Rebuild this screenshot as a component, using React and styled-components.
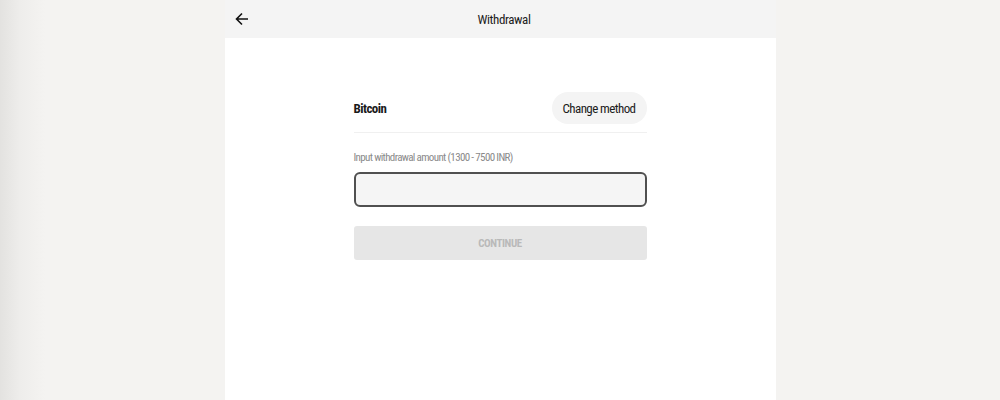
import styled, { createGlobalStyle } from 'styled-components';

const GlobalStyle = createGlobalStyle`
  html, body {
    margin: 0;
    padding: 0;
  }
  body {
    font-family: "Roboto Condensed", "Liberation Sans Narrow", "DejaVu Sans Condensed", Roboto, sans-serif;
    letter-spacing: -0.5px;
    color: #1f1f1f;
  }
`;

const Page = styled.div`
  display: flex;
  justify-content: center;
  min-height: 100vh;
  background: linear-gradient(to right, #e3e2e0 0px, #eeedeb 20px, #f4f3f1 45px, #f4f3f1 100%);
`;

const Panel = styled.div`
  width: 551px;
  background: #ffffff;
  display: flex;
  flex-direction: column;
`;

const Header = styled.div`
  height: 38px;
  background: #f4f4f4;
  display: grid;
  grid-template-columns: 1fr auto 1fr;
  align-items: center;
  padding: 0 10px;
`;

const BackButton = styled.button`
  justify-self: start;
  display: flex;
  align-items: center;
  border: none;
  background: none;
  padding: 0;
  cursor: pointer;
  color: #111;
`;

const Title = styled.div`
  font-size: 13px;
  font-weight: 400;
  letter-spacing: -0.4px;
  color: #1c1c1c;
  padding-left: 8px;
`;

const Body = styled.div`
  width: 293px;
  margin: 0 auto;
  padding-top: 54px;
  display: flex;
  flex-direction: column;
`;

const MethodRow = styled.div`
  display: flex;
  align-items: center;
  justify-content: space-between;
  padding-bottom: 8px;
  border-bottom: 1px solid #f0f0f0;
`;

const MethodName = styled.div`
  font-size: 13px;
  font-weight: 700;
  letter-spacing: -0.55px;
  color: #1a1a1a;
`;

const PillButton = styled.button`
  height: 32px;
  width: 95px;
  padding: 0;
  border: none;
  border-radius: 16px;
  background: #f4f4f4;
  font-family: inherit;
  font-size: 13px;
  font-weight: 400;
  letter-spacing: -0.6px;
  color: #1c1c1c;
  cursor: pointer;
`;

const Label = styled.div`
  margin-top: 18px;
  font-size: 11px;
  letter-spacing: -0.65px;
  color: #8a8a8a;
`;

const AmountInput = styled.input`
  margin-top: 8px;
  height: 35px;
  box-sizing: border-box;
  border: 2px solid #505050;
  border-radius: 6px;
  background: #f5f5f5;
  outline: none;
  padding: 0 12px;
  font-family: inherit;
  font-size: 13px;
`;

const SubmitButton = styled.button`
  margin-top: 19px;
  height: 34px;
  border: none;
  border-radius: 3px;
  background: #e6e6e6;
  font-family: inherit;
  font-size: 11px;
  font-weight: 700;
  letter-spacing: -0.4px;
  color: #b9b9b9;
  text-transform: uppercase;
  cursor: default;
`;

function App() {
  return (
    <>
      <GlobalStyle />
      <Page>
        <Panel>
          <Header>
            <BackButton aria-label="Back">
              <svg width="14" height="14" viewBox="0 0 14 14" fill="none">
                <path d="M13 7H2M7 1.5L1.5 7 7 12.5" stroke="currentColor" strokeWidth="1.6" />
              </svg>
            </BackButton>
            <Title>Withdrawal</Title>
            <span />
          </Header>
          <Body>
            <MethodRow>
              <MethodName>Bitcoin</MethodName>
              <PillButton>Change method</PillButton>
            </MethodRow>
            <Label>Input withdrawal amount (1300 - 7500 INR)</Label>
            <AmountInput type="text" />
            <SubmitButton disabled>Continue</SubmitButton>
          </Body>
        </Panel>
      </Page>
    </>
  );
}

export default App;
